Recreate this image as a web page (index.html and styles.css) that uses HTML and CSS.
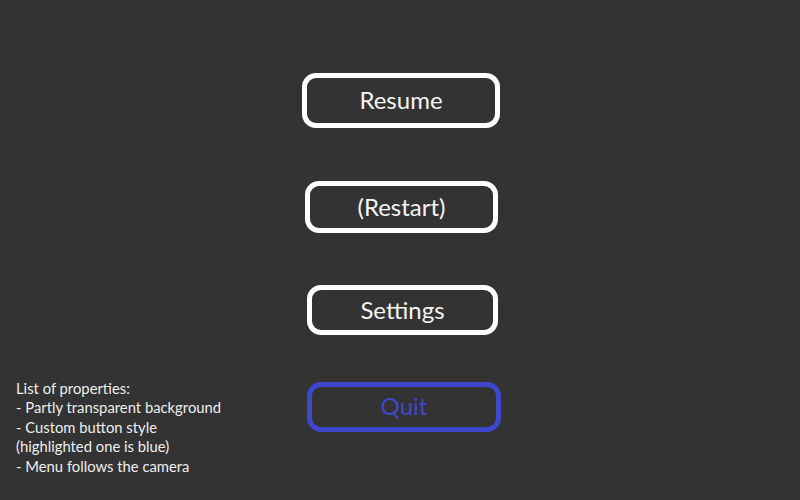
FILE: index.html
```html
<!DOCTYPE html>
<html lang="en">
<head>
  <meta charset="UTF-8">
  <title>Pause Menu</title>
  <link rel="stylesheet" href="styles.css">
</head>
<body>
  <div class="screen">
    <div class="menu">
      <button class="menu-btn btn-resume">Resume</button>
      <button class="menu-btn btn-restart">(Restart)</button>
      <button class="menu-btn btn-settings">Settings</button>
      <button class="menu-btn btn-quit active">Quit</button>
    </div>

    <div class="notes">
      List of properties:<br>
      - Partly transparent background<br>
      - Custom button style<br>
      (highlighted one is blue)<br>
      - Menu follows the camera
    </div>
  </div>
</body>
</html>
```

FILE: styles.css
```css
* { box-sizing: border-box; }

body {
  margin: 0;
  background-color: #333333;
  font-family: Lato, 'Open Sans', sans-serif;
  color: #f4f4f4;
}

.screen {
  width: 800px;
  height: 500px;
  display: grid;
  grid-template-columns: 300px 202px 1fr;
  grid-template-rows: 1fr;
}

.menu {
  grid-column: 2;
  grid-row: 1;
  display: flex;
  flex-direction: column;
  align-items: flex-start;
  padding-top: 73px;
}

.menu-btn {
  display: block;
  background: none;
  border: 5px solid #ffffff;
  border-radius: 14px;
  color: #f4f4f4;
  font-family: Lato, 'Open Sans', sans-serif;
  font-size: 24px;
  padding: 0 0 2px;
  cursor: pointer;
}

.btn-resume {
  width: 198px;
  height: 55px;
  margin-left: 2px;
}

.btn-restart {
  width: 193px;
  height: 52px;
  margin-top: 53px;
  margin-left: 5px;
}

.btn-settings {
  width: 191px;
  height: 50px;
  margin-top: 52px;
  margin-left: 7px;
}

.btn-quit {
  width: 194px;
  height: 50px;
  margin-top: 47px;
  margin-left: 7px;
  padding-bottom: 4px;
}

.menu-btn.active {
  border-color: #3f48cc;
  color: #3f48cc;
}

.notes {
  grid-column: 1;
  grid-row: 1;
  align-self: end;
  padding: 0 0 24px 16px;
  font-size: 14.8px;
  line-height: 19.5px;
  color: #eeeeee;
}
```
